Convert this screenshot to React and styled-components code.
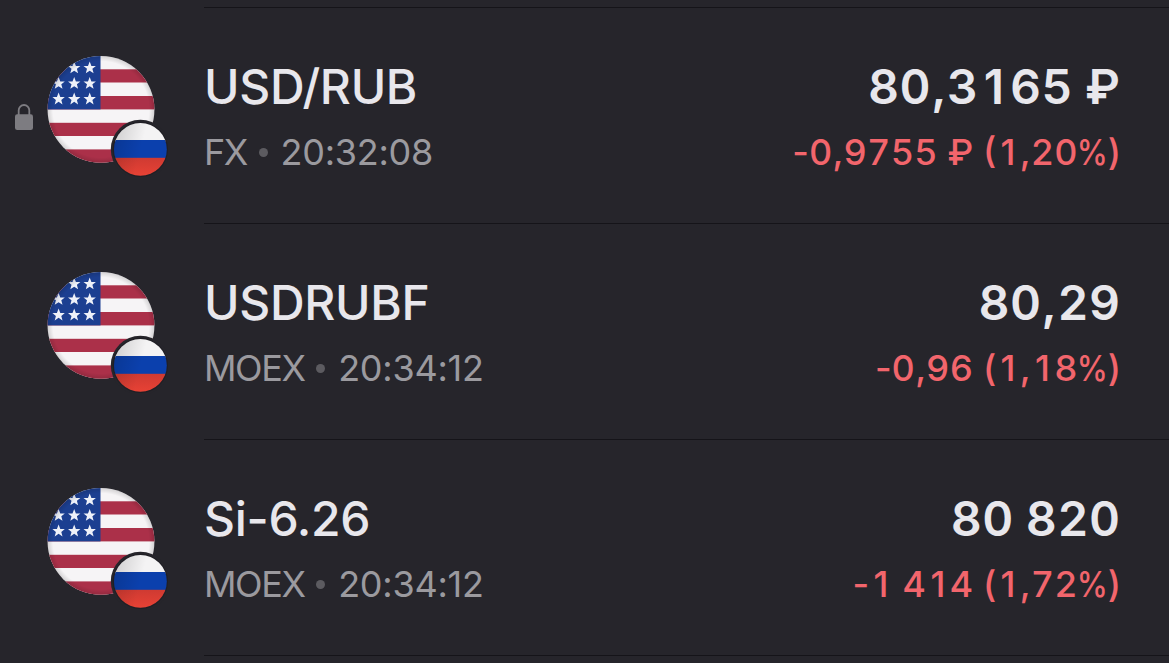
import React from 'react';
import styled, { createGlobalStyle } from 'styled-components';

const quotes = [
    {
        name: 'USD/RUB',
        exchange: 'FX',
        time: '20:32:08',
        price: '80,3165 ₽',
        change: '-0,9755 ₽ (1,20%)',
        locked: true,
    },
    {
        name: 'USDRUBF',
        exchange: 'MOEX',
        time: '20:34:12',
        price: '80,29',
        change: '-0,96 (1,18%)',
    },
    {
        name: 'Si-6.26',
        exchange: 'MOEX',
        time: '20:34:12',
        price: '80 820',
        change: '-1 414 (1,72%)',
    },
];

// star centres in the canton, the corner one is cut off by the circle
const stars = [
    [27.2, 12.5], [42.7, 12.5],
    [11.6, 28], [27.2, 28], [42.7, 28],
    [11.6, 43.6], [27.2, 43.6], [42.7, 43.6],
];

const starPath = 'M0 -6.4L1.7 -2L6.2 -2L2.7 0.9L3.9 5.4L0 2.8L-3.9 5.4L-2.7 0.9L-6.2 -2L-1.7 -2Z';

function Lock() {
    return (
        <svg width="18" height="26" viewBox="0 0 18 26">
            <path d="M3.7 11V6.3a5.3 5.3 0 0 1 10.6 0V11" fill="none" stroke="#7d7c81" strokeWidth="1.8" />
            <rect y="10.3" width="18" height="15.7" rx="2.2" fill="#7d7c81" />
        </svg>
    );
}

function PairIcon({ id }) {
    return (
        <svg width="121" height="123" viewBox="0 -0.4 121 123">
            <defs>
                <clipPath id={`us-${id}`}>
                    <circle cx="54" cy="54" r="53.4" />
                </clipPath>
                <clipPath id={`ru-${id}`}>
                    <circle cx="93.4" cy="94" r="26.4" />
                </clipPath>
                <radialGradient id={`edge-${id}`}>
                    <stop offset="0.9" stopColor="#000" stopOpacity="0" />
                    <stop offset="1" stopColor="#000" stopOpacity="0.14" />
                </radialGradient>
                <linearGradient id={`shade-${id}`} x1="0" y1="0" x2="1" y2="0.25">
                    <stop offset="0" stopColor="#000" stopOpacity="0.16" />
                    <stop offset="0.6" stopColor="#000" stopOpacity="0" />
                </linearGradient>
                <linearGradient id={`red-${id}`} x1="0" y1="0" x2="0" y2="1">
                    <stop offset="0" stopColor="#cf3a32" />
                    <stop offset="1" stopColor="#ea4335" />
                </linearGradient>
            </defs>
            <g clipPath={`url(#us-${id})`}>
                <rect width="108" height="108" fill="#f6f4f6" />
                <rect y="13.9" width="108" height="13.2" fill="#ab3049" />
                <rect y="40.6" width="108" height="13.4" fill="#ab3049" />
                <rect y="67.4" width="108" height="13.2" fill="#ab3049" />
                <rect y="94" width="108" height="14" fill="#ab3049" />
                <rect width="53.5" height="54" fill="#1c3f91" />
                {stars.map(([x, y]) => (
                    <path key={`${x}-${y}`} d={starPath} transform={`translate(${x} ${y})`} fill="#eef1f9" />
                ))}
                <circle cx="54" cy="54" r="53.4" fill={`url(#edge-${id})`} />
            </g>
            <circle cx="93.4" cy="94" r="29.6" fill="#26252b" />
            <circle cx="93.4" cy="94" r="27.6" fill="#201f25" />
            <g clipPath={`url(#ru-${id})`}>
                <rect x="66" y="66" width="55" height="20" fill="#f4f3f4" />
                <rect x="66" y="84.6" width="55" height="18.2" fill="#0b40ad" />
                <rect x="66" y="102.4" width="55" height="20" fill={`url(#red-${id})`} />
                <circle cx="93.4" cy="94" r="26.4" fill={`url(#shade-${id})`} />
            </g>
        </svg>
    );
}

// digits are fixed width, but the one is drawn without its tabular foot
function Amount({ value }) {
    return value.split(/(1|%|[02-9]+)/).map((part, i) => {
        if (part === '1') return <One key={i}>1</One>;
        if (part === '%') return <Percent key={i}>%</Percent>;
        if (/\d/.test(part)) return <Digits key={i}>{part}</Digits>;
        return part;
    });
}

function App() {
    return (
        <>
            <GlobalStyle />
            <List>
                {quotes.map((quote, i) => (
                    <Row key={quote.name}>
                        <LockCell>{quote.locked && <Lock />}</LockCell>
                        <IconCell>
                            <PairIcon id={i} />
                        </IconCell>
                        <Content>
                            <Column>
                                <Name>{quote.name}</Name>
                                <Meta>
                                    <Exchange>{quote.exchange}</Exchange>
                                    <Dot />
                                    {quote.time}
                                </Meta>
                            </Column>
                            <Column $end>
                                <Price>
                                    <Amount value={quote.price} />
                                </Price>
                                <Change>
                                    <Amount value={quote.change} />
                                </Change>
                            </Column>
                        </Content>
                    </Row>
                ))}
                <BottomLine />
            </List>
        </>
    );
}

const GlobalStyle = createGlobalStyle`
    * {
        box-sizing: border-box;
    }

    body {
        margin: 0;
        background: #26252b;
        font-family: Inter, 'Liberation Sans', sans-serif;
        overflow: hidden;
    }
`;

const List = styled.div`
    display: flex;
    flex-direction: column;
    height: 663px;
    padding-top: 7px;
    background: #26252b;
`;

const Row = styled.div`
    display: flex;
    height: 216px;
    flex-shrink: 0;

    svg {
        display: block;
    }
`;

const LockCell = styled.div`
    width: 47px;
    padding: 97px 0 0 15px;
`;

const IconCell = styled.div`
    width: 157px;
    padding-top: 48px;
`;

const Content = styled.div`
    flex: 1;
    display: flex;
    justify-content: space-between;
    padding: 49px 49px 0 0;
    border-top: 1px solid #151419;
`;

const Column = styled.div`
    display: flex;
    flex-direction: column;
    align-items: ${({ $end }) => ($end ? 'flex-end' : 'flex-start')};
    white-space: nowrap;
`;

const Name = styled.div`
    font-size: 48px;
    line-height: 60px;
    font-weight: 500;
    letter-spacing: -0.3px;
    color: #e8e7ec;
`;

const Meta = styled.div`
    display: flex;
    align-items: center;
    margin-top: 12px;
    font-size: 36px;
    line-height: 46px;
    letter-spacing: -0.25px;
    color: #9b9a9f;
`;

const Exchange = styled.span`
    letter-spacing: -1.4px;
`;

const Dot = styled.span`
    width: 9px;
    height: 9px;
    margin: 0 13px 0 11.5px;
    border-radius: 50%;
    background: #5c5b60;
`;

const Price = styled.div`
    margin-right: -0.5px;
    font-size: 48px;
    line-height: 60px;
    font-weight: 600;
    letter-spacing: 0.5px;
    word-spacing: -0.6px;
    color: #e8e7ec;
`;

const Change = styled.div`
    margin: 12px -1px 0 0;
    font-size: 36px;
    line-height: 46px;
    font-weight: 500;
    color: #f2656c;
`;

const Digits = styled.span`
    font-variant-numeric: tabular-nums;

    ${Change} & {
        letter-spacing: 0.3px;
    }
`;

const One = styled.span`
    display: inline-block;
    width: 0.655em;
    text-align: center;
`;

const Percent = styled.span`
    display: inline-block;
    margin-left: -6px;
    transform: scaleX(0.87);
    transform-origin: right;
`;

const BottomLine = styled.div`
    height: 1px;
    margin-left: 204px;
    background: #151419;
`;

export default App;
